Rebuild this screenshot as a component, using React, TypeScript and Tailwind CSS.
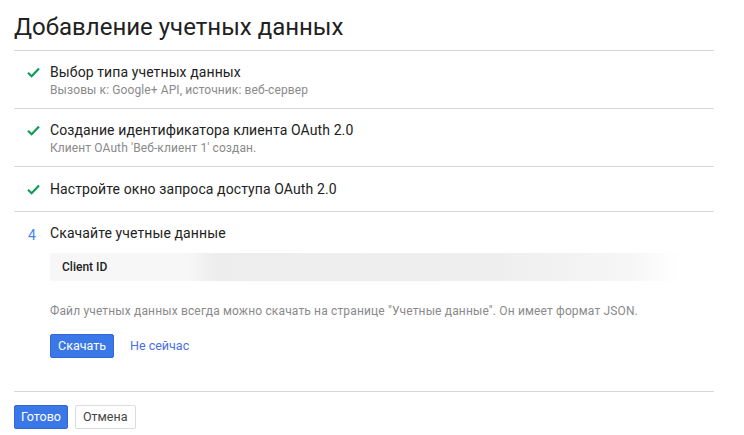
import React from 'react';

const font = { fontFamily: 'Roboto, "Noto Sans", sans-serif' };

const Check = () => (
  <svg width="13" height="11" viewBox="0 0 13 11" className="mt-[5px]">
    <path d="M1 5.8 L4.6 9.2 L12 1.6" fill="none" stroke="#0f9d58" strokeWidth="2.2" />
  </svg>
);

interface StepProps {
  marker: React.ReactNode;
  title: string;
  sub?: string;
  className?: string;
  children?: React.ReactNode;
}

const Step: React.FC<StepProps> = ({ marker, title, sub, className, children }) => (
  <div className={`flex border-b border-[#d6d6d6] ${className ?? ''}`}>
    <div className="w-[36px] pl-[13px] shrink-0">{marker}</div>
    <div className="flex-1">
      <div className="text-[14px] leading-[20px] text-[#222] tracking-[0.1px]">{title}</div>
      {sub && <div className="text-[12px] leading-[16px] text-[#8a8a8a] tracking-[0.1px]">{sub}</div>}
      {children}
    </div>
  </div>
);

export default function App() {
  return (
    <div className="w-[744px] h-[435px] bg-white overflow-hidden" style={font}>
      <div className="ml-[14px] w-[700px]">
        <h1 className="text-[24px] leading-[30px] pt-[12px] pb-[8px] text-[#212121] border-b border-[#d6d6d6]">
          Добавление учетных данных
        </h1>

        <Step
          marker={<Check />}
          title="Выбор типа учетных данных"
          sub="Вызовы к: Google+ API, источник: веб-сервер"
          className="pt-[11px] pb-[10px]"
        />
        <Step
          marker={<Check />}
          title="Создание идентификатора клиента OAuth 2.0"
          sub="Клиент OAuth 'Веб-клиент 1' создан."
          className="pt-[11px] pb-[10px]"
        />
        <Step
          marker={<Check />}
          title="Настройте окно запроса доступа OAuth 2.0"
          className="pt-[12px] pb-[12px]"
        />
        <Step
          marker={<span className="text-[14px] leading-[20px] text-[#4285f4] pl-[1px]">4</span>}
          title="Скачайте учетные данные"
          className="pt-[11px] pb-[33px]"
        >
          <div className="mt-[10px] h-[28px] w-[630px] flex items-center bg-[linear-gradient(to_right,#f7f7f7_0%,#f7f7f7_22%,#ededed_26%,#eeeeee_70%,#f6f6f6_92%,#ffffff_100%)]">
            <span className="pl-[12px] text-[12px] font-medium text-[#222]">Client ID</span>
          </div>
          <div className="mt-[22px] text-[12px] leading-[16px] text-[#8a8a8a] tracking-[0.15px]">
            Файл учетных данных всегда можно скачать на странице "Учетные данные". Он имеет формат JSON.
          </div>
          <div className="mt-[15px] flex items-center gap-[16px]">
            <button className="h-[24px] px-[7px] rounded-[2px] bg-[#3b78e7] border border-[#3367d6] text-white text-[12.5px]">
              Скачать
            </button>
            <span className="text-[12.5px] text-[#4a6fe0]">Не сейчас</span>
          </div>
        </Step>

        <div className="pt-[13px] flex gap-[7px]">
          <button className="h-[24px] px-[6px] rounded-[2px] bg-[#3b78e7] border border-[#3367d6] text-white text-[12.5px]">
            Готово
          </button>
          <button className="h-[24px] px-[7px] rounded-[2px] bg-white border border-[#dcdcdc] text-[#444] text-[12.5px]">
            Отмена
          </button>
        </div>
      </div>
    </div>
  );
}
